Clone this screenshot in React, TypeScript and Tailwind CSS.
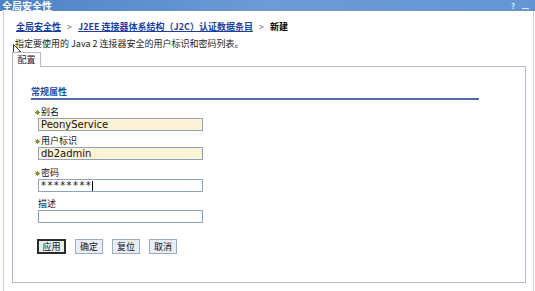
import React from "react";

const cjk = "font-['SimSun','Noto_Sans_CJK_SC',sans-serif]";

const Star = () => (
  <svg width="5" height="5" viewBox="0 0 5 5" className="shrink-0">
    <path d="M2.5 0 L2.5 5 M0 2.5 L5 2.5 M0.7 0.7 L4.3 4.3 M4.3 0.7 L0.7 4.3" stroke="#8c8c2c" strokeWidth="1" />
  </svg>
);

const Label = ({ text, required }: { text: string; required?: boolean }) => (
  <div className="flex items-center h-[10px] text-[9px] leading-[10px] text-[#111]">
    {required ? (
      <>
        <Star />
        <span className="ml-[1px]">{text}</span>
      </>
    ) : (
      <span className="ml-[3px]">{text}</span>
    )}
  </div>
);

const Field = ({
  label,
  value,
  required,
  filled,
}: {
  label: string;
  value: string;
  required?: boolean;
  filled?: boolean;
}) => (
  <div className="flex flex-col">
    <Label text={label} required={required} />
    <input
      readOnly
      value={value}
      className={`ml-[3px] mt-[1px] w-[165px] h-[13px] px-[2px] border border-[#8ea2bf] text-[10px] leading-[11px] text-[#111] font-['DejaVu_Sans',sans-serif] outline-none ${
        filled ? "bg-[#fdf3d6]" : "bg-white"
      }`}
    />
  </div>
);

const App = () => {
  return (
    <div className={`relative w-[535px] h-[291px] bg-white overflow-hidden ${cjk}`}>
      {/* title bar */}
      <div className="h-[11px] flex items-center justify-between bg-gradient-to-r from-[#4f83c6] via-[#6c9bd6] to-[#6495d4] pl-[2px] pr-[6px]">
        <span className="text-white font-bold text-[10px] leading-[11px]">全局安全性</span>
        <div className="flex items-center gap-[7px] text-[#dfe9f7] text-[8px] leading-none">
          <span className="font-bold">?</span>
          <span className="w-[7px] h-[7px] border-b border-[#dfe9f7]"></span>
        </div>
      </div>

      {/* page frame */}
      <div className="ml-[3px] w-[531px] h-[280px] border-l border-r border-[#cdd2da] pt-[10px]">
        {/* breadcrumb */}
        <div className="pl-[12px] flex items-center text-[9px] leading-[12px] font-bold">
          <span className="text-[#1c3f9e] underline">全局安全性</span>
          <span className="text-[#666] font-normal mx-[6px]">&gt;</span>
          <span className="text-[#1c3f9e] underline">J2EE 连接器体系结构（J2C）认证数据条目</span>
          <span className="text-[#666] font-normal mx-[6px]">&gt;</span>
          <span className="text-black">新建</span>
        </div>

        {/* description */}
        <div className="pl-[11px] mt-[5px] text-[9px] leading-[12px] text-[#222]">
          指定要使用的 Java 2 连接器安全的用户标识和密码列表。
        </div>

        {/* tab */}
        <div className="relative z-10 ml-[8px] mt-[2px] -mb-[1px] w-[29px] h-[15px] border border-b-0 border-[#b4bccb] bg-white flex items-center justify-center text-[9px] text-[#222]">
          配置
        </div>

        {/* panel */}
        <div className="ml-[8px] w-[514px] h-[217px] border border-[#b4bccb] pt-[20px] pl-[18px]">
          <div className="w-[448px] border-b-2 border-[#4d6aa6] pb-[1px]">
            <span className="block text-[9px] leading-[10px] font-bold text-[#1f4ca3]">常规属性</span>
          </div>

          <div className="pl-[4px] mt-[7px] flex flex-col gap-[5px]">
            <Field label="别名" value="PeonyService" required filled />
            <Field label="用户标识" value="db2admin" required filled />
            <div className="flex flex-col mt-[3px]">
              <Label text="密码" required />
              <div className="ml-[3px] mt-[1px] w-[165px] h-[13px] px-[2px] border border-[#8ea2bf] bg-white flex items-center">
                <span className="text-[10px] leading-[11px] tracking-[1.4px] text-[#111] font-['DejaVu_Sans',sans-serif]">********</span>
                <span className="w-px h-[10px] bg-black"></span>
              </div>
            </div>
            <div className="mt-[2px]">
              <Field label="描述" value="" />
            </div>
          </div>

          <div className="mt-[16px] flex gap-[9px] pl-[6px]">
            <button className="w-[29px] h-[15px] border-2 border-[#2b2b2b] bg-[#e9eef6] text-[9px] leading-[11px] text-[#111]">
              应用
            </button>
            <button className="w-[28px] h-[15px] border border-[#9eacc2] bg-[#e9eef6] text-[9px] leading-[11px] text-[#111]">
              确定
            </button>
            <button className="w-[28px] h-[15px] border border-[#9eacc2] bg-[#e9eef6] text-[9px] leading-[11px] text-[#111]">
              复位
            </button>
            <button className="w-[28px] h-[15px] border border-[#9eacc2] bg-[#e9eef6] text-[9px] leading-[11px] text-[#111]">
              取消
            </button>
          </div>
        </div>
      </div>

      {/* mouse pointer */}
      <svg className="absolute left-[13px] top-[44px]" width="9" height="14" viewBox="0 0 9 14">
        <path d="M0.5 0.5 L0.5 11 L3 8.5 L5 13 L6.5 12.3 L4.6 8 L8 8 Z" fill="#fff" stroke="#333" strokeWidth="1" />
      </svg>
    </div>
  );
};

export default App;
